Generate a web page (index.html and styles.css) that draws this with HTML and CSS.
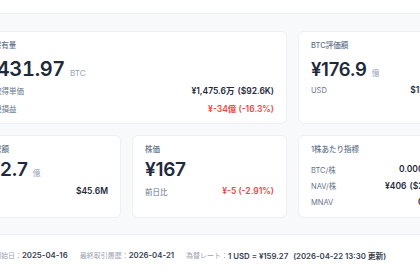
FILE: index.html
```html
<!DOCTYPE html>
<html lang="ja">
<head>
<meta charset="utf-8">
<link rel="stylesheet" href="styles.css">
</head>
<body>
<div class="page">
  <div class="topbar"></div>
  <div class="grid">
    <section class="card span2">
      <div class="label">BTC保有量</div>
      <div class="big"><span class="num hero">1,431.97</span><span class="unit">BTC</span></div>
      <div class="rows">
        <div class="row"><span class="key">平均取得単価</span><span class="val">¥1,475.6万<span class="sub">($92.6K)</span></span></div>
        <div class="row"><span class="key">未実現損益</span><span class="val neg">¥-34億 (-16.3%)</span></div>
      </div>
    </section>
    <section class="card">
      <div class="label">BTC評価額</div>
      <div class="big"><span class="num mid">¥176.9</span><span class="unit">億</span></div>
      <div class="rows">
        <div class="row"><span class="key">USD</span><span class="val">$111.1M</span></div>
      </div>
    </section>
    <section class="card">
      <div class="label">時価総額</div>
      <div class="big small"><span class="num">¥72.7</span><span class="unit">億</span></div>
      <div class="rows">
        <div class="row"><span class="key">USD</span><span class="val">$45.6M</span></div>
      </div>
    </section>
    <section class="card">
      <div class="label">株価</div>
      <div class="big small"><span class="num">¥167</span></div>
      <div class="rows">
        <div class="row"><span class="key">前日比</span><span class="val neg">¥-5 (-2.91%)</span></div>
      </div>
    </section>
    <section class="card">
      <div class="label">1株あたり指標</div>
      <div class="rows tight">
        <div class="row"><span class="key">BTC/株</span><span class="val">0.000033</span></div>
        <div class="row"><span class="key">NAV/株</span><span class="val">¥406<span class="sub">($2.55)</span></span></div>
        <div class="row"><span class="key">MNAV</span><span class="val">0.41x</span></div>
      </div>
    </section>
  </div>
  <footer class="footer">
    <div class="item"><span class="fk">取引開始日：</span><span class="fv">2025-04-16</span></div>
    <div class="item"><span class="fk">最終取引履歴：</span><span class="fv">2026-04-21</span></div>
    <div class="item"><span class="fk">為替レート：</span><span class="fv">1 USD = ¥159.27<span class="note">(2026-04-22 13:30 更新)</span></span></div>
  </footer>
</div>
</body>
</html>
```

FILE: styles.css
```css
html, body {
  margin: 0;
  padding: 0;
  width: 420px;
  height: 280px;
  overflow: hidden;
  background: #f8f9fb;
  font-family: Inter, "Noto Sans CJK JP", sans-serif;
  color: #1e293b;
}

.page {
  width: 487px;
  margin-left: -34px;
}

.topbar {
  height: 13px;
  background: #ffffff;
  border-bottom: 1px solid #eef0f3;
  margin-bottom: 17px;
}

.grid {
  display: grid;
  grid-template-columns: repeat(3, 155px);
  gap: 11px;
}

.card {
  background: #ffffff;
  border: 1px solid #edf0f4;
  border-radius: 6px;
  padding: 8px 12px;
}

.span2 {
  grid-column: span 2;
}

.label {
  font-size: 7.5px;
  line-height: 12px;
  color: #64748b;
  font-weight: 500;
}

.big {
  display: flex;
  align-items: baseline;
  gap: 5px;
  margin-top: 5px;
  height: 24px;
}

.num {
  font-size: 20px;
  line-height: 24px;
  font-weight: 600;
  letter-spacing: -0.3px;
  color: #1e293b;
}

.num.hero {
  font-variant-numeric: tabular-nums;
}

.num.mid {
  font-size: 18.5px;
}

.unit {
  font-size: 8px;
  color: #94a3b8;
}

.big.small {
  margin-top: 4px;
  height: 20px;
}

.big.small .num {
  font-size: 19px;
  line-height: 20px;
}

.rows {
  display: flex;
  flex-direction: column;
  gap: 4px;
  margin-top: 2px;
}

.big.small + .rows {
  margin-top: 4px;
}

.rows.tight {
  gap: 2.5px;
  margin-top: 6px;
}

.row {
  display: flex;
  justify-content: space-between;
  align-items: center;
  height: 14px;
}

.key {
  font-size: 7.5px;
  color: #64748b;
}

.val {
  font-size: 8.5px;
  font-weight: 600;
  color: #1e293b;
  white-space: nowrap;
}

.sub {
  margin-left: 3px;
}

.neg {
  color: #ef4444;
}

.footer {
  margin-top: 16px;
  background: #ffffff;
  border-top: 1px solid #eef0f3;
  padding: 14px 14px 20px;
  display: flex;
  gap: 12px;
  white-space: nowrap;
}

.item {
  display: flex;
  align-items: center;
  height: 12px;
}

.fk {
  font-size: 7px;
  color: #9ca3af;
}

.fv {
  font-size: 7.8px;
  font-weight: 600;
  color: #374151;
}

.note {
  margin-left: 5px;
}
```
